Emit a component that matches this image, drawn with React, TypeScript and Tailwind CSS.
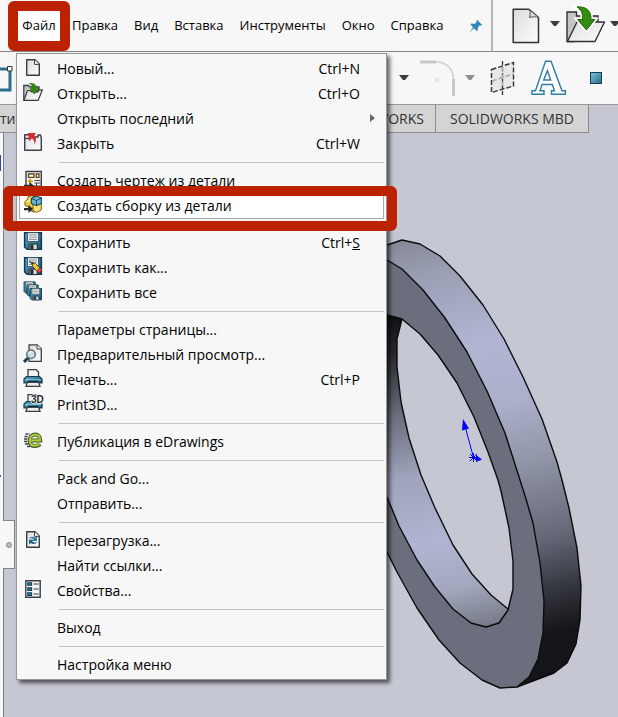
import { ReactNode } from "react";

type Entry = {
  label: string;
  icon?: ReactNode;
  shortcut?: ReactNode;
  submenu?: boolean;
  active?: boolean;
};

const DARK = "#3b3f45";

function Icon({ children }: { children?: ReactNode }) {
  return (
    <svg viewBox="0 0 20 21" className="h-[21px] w-5 shrink-0 overflow-visible" aria-hidden="true">
      {children}
    </svg>
  );
}

function Sheet() {
  return (
    <>
      <path d="M3.7 1.7H12L16.3 6V17.3H3.7Z" fill="url(#paper)" stroke={DARK} strokeWidth="1.4" strokeLinejoin="round" />
      <path d="M11.5 1.7V6.4H16.3" fill="#fff" stroke={DARK} strokeWidth="1" />
    </>
  );
}

function Floppy({ x = 0, y = 0, s = 1 }: { x?: number; y?: number; s?: number }) {
  return (
    <g transform={`translate(${x} ${y}) scale(${s})`}>
      <path d="M1.6 .7H18.4V17.4H4L1.6 15Z" fill="url(#steel)" stroke="#0d3850" strokeWidth="1.4" />
      <path d="M4.5 .7H15.5V9.5H4.5Z" fill="#f2f2f2" stroke="#22475c" strokeWidth=".8" />
      <path d="M6 3H14M6 5.2H14M6 7.4H14" stroke="#8a8a8a" strokeWidth="1" />
      <path d="M6 12H14.5V17.6H6Z" fill="#8c9298" stroke="#26323a" strokeWidth="1" />
      <path d="M7.5 12.8H10V17H7.5Z" fill="#23292e" />
      <path d="M11 12.8H13.5V17H11Z" fill="#d5d8da" />
    </g>
  );
}

function Printer() {
  return (
    <>
      <path d="M5 8V.7H13.3L15.5 3V8" fill="#f4f4f4" stroke={DARK} strokeWidth="1.3" />
      <path d="M3.5 7.5H16.5L19 10V14H1V10Z" fill="url(#steel)" stroke="#123a50" strokeWidth="1.2" />
      <path d="M2 10.8H18" stroke="#8ccbe3" strokeWidth="1.2" />
      <path d="M4.5 13H15.5L17 17.4H3Z" fill="#ececec" stroke={DARK} strokeWidth="1.3" />
      <path d="M5 12.6H15" stroke="#0c2c3d" strokeWidth="1.8" />
    </>
  );
}

const newIcon = (
  <Icon>
    <Sheet />
  </Icon>
);

const openIcon = (
  <Icon>
    <path d="M.8 2.5H5.5L7 4H16V7L5 17.3H.8Z" fill="#c7c7c7" stroke={DARK} strokeWidth="1.3" />
    <path d="M4.5 7.5H7L8.5 9H15L16 6.8H19.4L15.2 17.3H1Z" fill="url(#paper)" stroke={DARK} strokeWidth="1.2" strokeLinejoin="round" />
    <path d="M6.5 .6C10.5-.2 13.4 1.4 13.4 5.2H16L11.4 11 7 5.6H9.8C9.8 3.4 9 1.8 6.5 .6Z" fill="#348c0e" stroke="#1e6705" strokeWidth=".6" />
  </Icon>
);

const closeIcon = (
  <Icon>
    <path d="M1.7 1.7H6L7.5 4H15V2H17.5L18.3 5V17.3H1.7Z" fill="url(#paper)" stroke={DARK} strokeWidth="1.4" strokeLinejoin="round" />
    <path d="M2 5.5H6" stroke={DARK} strokeWidth="1.2" />
    <path d="M5 0H13L11.3 2.2C13.2 4 13.6 7.5 11.6 11.2C11.4 8.5 10.8 6.5 9 5.2L6 8.2Z" fill="#d32a38" />
  </Icon>
);

const drawingIcon = (
  <Icon>
    <path d="M3 1.5H18.3V16.3H3Z" fill="#f4f3ef" stroke={DARK} strokeWidth="1.4" />
    <path d="M5.5 4H11V7.3H5.5ZM13.2 4H16V7.3H13.2Z" fill="#fff" stroke="#5e4b15" strokeWidth="1.3" />
    <path d="M5.5 9.8H8.5V12.5H5.5Z" fill="#f6cf4d" />
    <path d="M7 8.8V14M4.8 11.3H10" stroke="#c99d22" strokeWidth="1.4" />
    <path d="M11.5 10.5H17.5M11.5 13H17.5M13.5 13V16" stroke={DARK} />
    <path d="M1 14.8H6.5V12L11 15.8L6.5 19.500V16.8H1Z" fill="#25282c" />
  </Icon>
);

const assemblyIcon = (
  <Icon>
    <path d="M2 6.500L5 4V1.800L8.500 .5L12 2V7L15 8V15.500L10.500 17L6 15V12L2 10.500Z" fill="#f4c93a" stroke="#735610" strokeWidth="1" />
    <path d="M3 7L6.500 5V2.500" fill="none" stroke="#fff0a5" strokeWidth="1.3" />
    <path d="M10 8.500L13.500 10.500L18.300 8V14.800L13.500 17.500L10 15.500Z" fill="#ffe070" stroke="#735610" strokeWidth="1" />
    <path d="M8.400 3.400L13 1L18.400 3V8.300L13.600 10.700L8.400 8.600Z" fill="#6eb4d3" stroke="#164b66" strokeWidth="1.1" />
    <path d="M8.500 3.500L13.500 5.500L18.400 3M13.500 5.500V10.500" fill="none" stroke="#164b66" strokeWidth="1" />
    <path d="M1 12.900H5.500V10L10 14L5.500 18V15.200H1Z" fill="#24272b" />
  </Icon>
);

const saveIcon = (
  <Icon>
    <Floppy />
  </Icon>
);

const saveAsIcon = (
  <Icon>
    <Floppy />
    <path d="M6 4L10 7L13 10" stroke="#287da4" strokeWidth="1.5" />
    <path d="M8.5 5.5L12.5 6.5L18.6 12.7L15.6 15.8L9.8 9.7Z" fill="#efc13c" stroke="#51401a" strokeWidth=".9" />
    <path d="M16.8 11L19 13.2L16.2 16L14 13.8Z" fill="#e24c4c" stroke="#762323" strokeWidth=".7" />
    <path d="M8.3 5.3L10.7 6L9.2 7.8Z" fill="#222" />
  </Icon>
);

const saveAllIcon = (
  <Icon>
    <Floppy s={0.66} y={-0.5} />
    <Floppy s={0.66} x={3} y={2.5} />
    <Floppy s={0.68} x={6} y={6} />
  </Icon>
);

const previewIcon = (
  <Icon>
    <path d="M6 .8H14.2L18.3 4.8V17.3H6Z" fill="url(#paper)" stroke={DARK} strokeWidth="1.3" />
    <path d="M14 .8V5H18.3" fill="#fff" stroke={DARK} />
    <path d="M1 17.8L6 13" stroke="#173f54" strokeWidth="3" />
    <circle cx="8" cy="10.3" r="4.3" fill="#c4dfe9" fillOpacity=".9" stroke="#66727a" strokeWidth="1.5" />
    <path d="M5.8 9.8A2.5 2.5 0 0 1 8.8 7.5" stroke="#fff" fill="none" />
  </Icon>
);

const printIcon = (
  <Icon>
    <Printer />
  </Icon>
);

const print3dIcon = (
  <Icon>
    <Printer />
    <text x="8" y="8.5" fontFamily="Liberation Sans" fontWeight="700" fontSize="10" fill="#26292c" stroke="#f7f7f7" strokeWidth="1.5" paintOrder="stroke">
      3D
    </text>
  </Icon>
);

const edrawingsIcon = (
  <Icon>
    <path d="M2.5 3H7M1.5 5.5H5M1 8H4.5M1 10.5H4.5M2 13H6M4 15.5H9" stroke={DARK} strokeWidth="1.3" strokeDasharray="3 1" />
    <path d="M8 9.5H17.2C17.2 5.4 15 3.5 12.4 3.5C8.9 3.5 6.5 6.1 6.5 9.7C6.5 13.2 8.8 15 12 15C14.1 15 15.8 14.3 16.8 13" fill="none" stroke="#41502a" strokeWidth="4" />
    <path d="M8 9.3H17C17 5.4 15 3.7 12.4 3.7C9 3.7 6.8 6.2 6.8 9.7C6.8 13 9 14.7 12 14.7C14 14.7 15.5 14.1 16.5 13.2" fill="none" stroke="#a9c936" strokeWidth="2.3" />
  </Icon>
);

const reloadIcon = (
  <Icon>
    <Sheet />
    <path d="M5.8 8.7C7 6.5 10.5 6 12.3 7.8L14 6.4V11H9.3L10.9 9.2C9.4 8.2 7.8 8.1 5.8 8.7Z" fill="#2c7a9d" />
    <path d="M14.3 12C13 14.2 9.7 14.6 7.8 12.9L6 14.5V9.8H10.8L9.2 11.5C10.7 12.6 12.3 12.7 14.3 12Z" fill="#1f617f" />
  </Icon>
);

const propertiesIcon = (
  <Icon>
    <path d="M2.8 .8H17.2V17.3H2.8Z" fill="#f3f3f3" stroke={DARK} strokeWidth="1.4" />
    <path d="M4.8 2.8H8.5V5.2H4.8ZM4.8 7.8H8.5V10.3H4.8ZM4.8 12.8H8.5V15.3H4.8Z" fill="#3f9fc5" stroke="#123f56" strokeWidth="1.2" />
    <path d="M10.5 4H15.8M10.5 9H15.8M10.5 14H15.8" stroke={DARK} strokeWidth="1.2" />
  </Icon>
);

const groups: Entry[][] = [
  [
    { label: "Новый...", icon: newIcon, shortcut: "Ctrl+N" },
    { label: "Открыть...", icon: openIcon, shortcut: "Ctrl+O" },
    { label: "Открыть последний", submenu: true },
    { label: "Закрыть", icon: closeIcon, shortcut: "Ctrl+W" },
  ],
  [
    { label: "Создать чертеж из детали", icon: drawingIcon },
    { label: "Создать сборку из детали", icon: assemblyIcon, active: true },
  ],
  [
    { label: "Сохранить", icon: saveIcon, shortcut: <>Ctrl+<u>S</u></> },
    { label: "Сохранить как...", icon: saveAsIcon },
    { label: "Сохранить все", icon: saveAllIcon },
  ],
  [
    { label: "Параметры страницы..." },
    { label: "Предварительный просмотр...", icon: previewIcon },
    { label: "Печать...", icon: printIcon, shortcut: "Ctrl+P" },
    { label: "Print3D...", icon: print3dIcon },
  ],
  [{ label: "Публикация в eDrawings", icon: edrawingsIcon }],
  [{ label: "Pack and Go..." }, { label: "Отправить..." }],
  [
    { label: "Перезагрузка...", icon: reloadIcon },
    { label: "Найти ссылки..." },
    { label: "Свойства...", icon: propertiesIcon },
  ],
  [{ label: "Выход" }],
  [{ label: "Настройка меню" }],
];

const menus = ["Файл", "Правка", "Вид", "Вставка", "Инструменты", "Окно", "Справка"];

function Defs() {
  return (
    <svg className="absolute h-0 w-0" aria-hidden="true">
      <defs>
        <linearGradient id="paper" x1="0" y1="0" x2="1" y2="1">
          <stop offset="0" stopColor="#dcdcdc" />
          <stop offset="1" stopColor="#fdfdfd" />
        </linearGradient>
        <linearGradient id="steel" x1="0" y1="0" x2="1" y2="1">
          <stop offset="0" stopColor="#62a9c8" />
          <stop offset="1" stopColor="#14506e" />
        </linearGradient>
      </defs>
    </svg>
  );
}

function Caret({ light }: { light?: boolean }) {
  return (
    <button type="button" aria-label="Ещё" className={light ? "shrink-0 text-[#8d8d8d]" : "shrink-0 text-[#3c3c3c]"}>
      <svg viewBox="0 0 10 6" className="h-[6px] w-[10px]">
        <path d="M0 0H10L6 5H4Z" fill="currentColor" />
      </svg>
    </button>
  );
}

function MenuBar() {
  return (
    <header className="flex h-[52px] shrink-0 border-b border-[#868686] bg-[#f7f7f7]">
      <nav className="flex flex-1 items-center pl-[18px] text-[13px] text-black">
        {menus.map((name, i) => (
          <button key={name} type="button" className={i === 0 ? "relative z-20 mr-1 h-[30px] w-[42px] bg-white" : "h-[30px] px-2"}>
            {name}
            {i === 0 && <span className="absolute -inset-[10px] rounded-md border-10 border-[#bb2200]" />}
          </button>
        ))}
        <button type="button" aria-label="Закрепить" className="mr-2 ml-auto">
          <svg viewBox="0 0 14 14" className="h-[14px] w-[14px]">
            <path d="M8 .8L13.2 6L11.8 6.8L10.8 6.2L8.7 8.7L8.8 11.3L7.8 12L5 9.2L.8 13.2L4 8.2L1.5 5.4L2.4 4.6L5.4 5L7.8 3.1L7.2 2Z" fill="#2f86b2" />
          </svg>
        </button>
      </nav>
      <div className="flex w-[127px] shrink-0 items-center overflow-hidden border-l-2 border-[#b5b5b5] pl-[19px]">
        <button type="button" aria-label="Новый" className="shrink-0">
          <svg viewBox="0 0 28 36" className="h-9 w-7">
            <path d="M1.2 1.2H17L26.5 9.5V34.5H1.2Z" fill="url(#paper)" stroke="#2f3135" strokeWidth="1.5" strokeLinejoin="round" />
            <path d="M17 1.2C18.500 4 18.500 6 17.500 9.500C21 8.500 24 8.500 26.500 9.500Z" fill="#ddd" stroke="#555" />
          </svg>
        </button>
        <div className="mx-[10px] mb-1 flex">
          <Caret />
        </div>
        <button type="button" aria-label="Открыть" className="mx-[-4px] mb-1 shrink-0">
          <svg viewBox="0 0 40 38" className="h-[38px] w-10">
            <path d="M1 7H10.500V11H32V18L8 36.500H1Z" fill="#c5c5c5" stroke="#2f3135" strokeWidth="1.400" />
            <path d="M11 17H38.500L29 36.500H1.500Z" fill="url(#paper)" stroke="#2f3135" strokeWidth="1.400" strokeLinejoin="round" />
            <path d="M11 2C20 1 25.500 6 25 14.500H28.800L20.500 25L11.500 14.500H16.500C17 8.500 15.500 5 11 2Z" fill="#348c10" stroke="#fff" strokeWidth="4" paintOrder="stroke" />
            <path d="M11 2C20 1 25.500 6 25 14.500H28.800L20.500 25L11.500 14.500H16.500C17 8.500 15.500 5 11 2Z" fill="#348c10" stroke="#226d07" />
          </svg>
        </button>
        <div className="mb-1 ml-2 flex">
          <Caret />
        </div>
      </div>
    </header>
  );
}

function ToolBar() {
  return (
    <div className="flex h-[53px] shrink-0 items-center justify-between border-b border-[#999] bg-[#f7f7f7]">
      <svg viewBox="0 0 13 30" className="h-[30px] w-[13px]">
        <path d="M0 6H10V27H0" fill="none" stroke="#2d6d90" strokeWidth="3" />
        <path d="M7.5 3.5H12V8H7.5Z" fill="#fff" stroke="#333" />
      </svg>
      <div className="flex items-center pr-4">
        <svg viewBox="0 0 24 24" className="mr-3 h-6 w-6">
          <circle cx="12" cy="12" r="10" fill="none" stroke="#2d6d90" strokeWidth="3" />
        </svg>
        <Caret />
        <button type="button" aria-label="Скругление" className="mr-[10px] ml-[11px]">
          <svg viewBox="0 0 35 36" className="h-9 w-[35px]">
            <path d="M0 2H16" stroke="#c7c7c7" strokeWidth="3" />
            <path d="M16 2C27 2 33.5 9 33.5 20" fill="none" stroke="#d7d7d7" strokeWidth="2" />
            <path d="M33.5 19V36" stroke="#c7c7c7" strokeWidth="3" />
            <path d="M15 18L19 22M19 18L15 22" stroke="#ddd" strokeWidth="1.3" />
          </svg>
        </button>
        <Caret light />
        <button type="button" aria-label="Плоскость" className="mr-4 ml-[15px]">
          <svg viewBox="0 0 25 34" className="h-[34px] w-[25px]">
            <path d="M1.5 8.5L23.5 1.5V25L1.5 31.5Z" fill="#e6e8e9" stroke="#303236" strokeWidth="1.4" strokeDasharray="5 2" />
            <path d="M12.5 0V34" stroke="#303236" strokeWidth="1.3" strokeDasharray="4 2" />
            <path d="M2 20L23 13M12.5 6V26" stroke="#aaa" strokeWidth="1.5" strokeDasharray="5 2" />
          </svg>
        </button>
        <button type="button" aria-label="Текст">
          <svg viewBox="0 0 36 36" className="h-9 w-9">
            <path d="M14.5 1.2H20L31 30.7H34.3V34.3H20.5V30.7H23.5L21.300 24.500H11L9 30.700H13V34.300H1V30.700H4.500Z M12.700 20H19.700L16.400 10.500Z" fill="#fff" stroke="#2f7ea5" strokeWidth="1.4" fillRule="evenodd" />
          </svg>
        </button>
        <button type="button" aria-label="Точка" className="ml-[23px] h-3 w-3 border border-[#173e52] bg-linear-to-br from-[#78c0dd] to-[#2b708f]" />
      </div>
    </div>
  );
}

function Ring() {
  const outerBack = "387,245 402,240 420,244 440,256 460,276 483,305 504,339 523,377 542,419 557,462 562,480 569,508 577,548 581,586 580,620 576,644 567,663 554,673 517,687";
  const outerFront = "387,260 402,269 423,290 445,318 467,352 487,391 505,433 520,480 526,499 533,523 540,563 544,601 543,633 538,659 529,677 517,687 500,688 482,680 460,663 439,640 417,608 397,572 387,552";
  const innerFront = "387,315 402,319 420,334 438,355 457,383 474,417 488,452 498,480 501,491 509,528 513,561 513,589 508,610 499,623 486,627 471,623 453,609 435,587 417,560 399,526 387,497";
  const innerBack = "402,319 397,339 397,367 401,402 409,438 421,475 435,508 453,545 472,574 491,595 508,609";
  return (
    <svg viewBox="387 233 231 484" className="absolute top-[100px] left-[387px] h-[484px] w-[231px]" aria-hidden="true">
      <defs>
        <linearGradient id="rim" gradientUnits="userSpaceOnUse" x1="400" y1="240" x2="510" y2="687">
          <stop offset="0" stopColor="#858996" />
          <stop offset=".09" stopColor="#9b9fb5" />
          <stop offset=".26" stopColor="#b1b6d3" />
          <stop offset=".4" stopColor="#abafca" />
          <stop offset=".53" stopColor="#9196a9" />
          <stop offset=".7" stopColor="#666978" />
          <stop offset=".82" stopColor="#33353d" />
          <stop offset=".91" stopColor="#141518" />
          <stop offset="1" stopColor="#141518" />
        </linearGradient>
        <linearGradient id="bore" gradientUnits="userSpaceOnUse" x1="387" y1="315" x2="450" y2="632">
          <stop offset="0" stopColor="#0d0e10" />
          <stop offset=".12" stopColor="#282a2f" />
          <stop offset=".3" stopColor="#666a78" />
          <stop offset=".5" stopColor="#9fa3bb" />
          <stop offset=".72" stopColor="#b0b5d2" />
          <stop offset=".87" stopColor="#a3a8bf" />
          <stop offset="1" stopColor="#777b89" />
        </linearGradient>
      </defs>
      <polygon points={`${outerBack} 529,677 538,659 543,633 544,601 540,563 533,523 520,480 505,433 487,391 467,352 445,318 423,290 402,269 387,260`} fill="url(#rim)" />
      <path d={`M${outerFront}Z M${innerFront}Z`} fill="#6b6e7c" fillRule="evenodd" />
      <polygon points={`387,315 ${innerBack} 499,623 486,627 471,623 453,609 435,587 417,560 399,526 387,497`} fill="url(#bore)" />
      <g fill="none" stroke="#0b0b0c" strokeWidth="1.4" strokeLinejoin="round">
        <polyline points={outerBack} />
        <polyline points={outerFront} />
        <polyline points={innerFront} />
        <polyline points={innerBack} />
      </g>
      <g stroke="#0000f5" fill="#0000f5">
        <path d="M473.5 457.5L465.5 428M473.5 457.5L478 459M469 457.5H478M470 454L477 461M477 454L470 461M473.5 453V462" />
        <path d="M463 419L469 428.5L462 430.500ZM476 455L482 459.500L476 462Z" stroke="none" />
      </g>
    </svg>
  );
}

function MenuRow({ item }: { item: Entry }) {
  return (
    <li className="relative">
      <button
        type="button"
        className={
          item.active
            ? "flex h-[25px] w-full items-center gap-[14px] border border-[#a8a8a8] bg-white pr-[23px] pb-[2px] pl-[3px] text-left"
            : "flex h-[25px] w-full items-center gap-[14px] border border-transparent pr-[23px] pb-[2px] pl-[3px] text-left"
        }
      >
        {item.icon ?? <Icon />}
        <span className="flex-1 whitespace-nowrap">{item.label}</span>
        {item.shortcut && <span>{item.shortcut}</span>}
      </button>
      {item.submenu && (
        <svg viewBox="0 0 5 8" className="absolute top-[7px] right-[9px] h-2 w-[5px]">
          <path d="M0 0L5 4L0 8Z" fill="#666" />
        </svg>
      )}
      {item.active && <span className="pointer-events-none absolute -top-2 -right-[13px] -bottom-3 -left-4 z-10 rounded-md border-10 border-[#bb2200]" />}
    </li>
  );
}

function FileMenu() {
  return (
    <div className="absolute top-[53px] left-4 z-10 w-[371px] border border-[#979797] bg-[#f7f7f7] px-[2px] pt-[3px] pb-[1px] text-[14px] text-black shadow-[3px_3px_4px_rgba(0,0,0,0.6)]">
      {groups.map((group, i) => (
        <ul key={i}>
          {i > 0 && <li role="separator" className="mt-[5px] mb-[6px] ml-10 h-px bg-[#c4c4c4]" />}
          {group.map((item) => (
            <MenuRow key={item.label} item={item} />
          ))}
        </ul>
      ))}
    </div>
  );
}

function App() {
  return (
    <div className="relative flex min-h-screen w-full flex-col overflow-hidden bg-[#c5c8d3] font-['Open_Sans','Noto_Sans',sans-serif]">
      <Defs />
      <MenuBar />
      <ToolBar />
      <div className="flex h-7 shrink-0 pr-[29px] text-[14px] text-[#333]">
        <button type="button" className="w-4 overflow-hidden border-b border-[#8c8c8c] bg-[#d4d4d4] text-left">
          ти
        </button>
        <button type="button" className="flex-1 border-r border-b border-[#8c8c8c] bg-[#d4d4d4] pr-[11px] text-right">
          SOLIDWORKS
        </button>
        <button type="button" className="w-[153px] border-r border-b border-[#8c8c8c] bg-[#d4d4d4] whitespace-nowrap">
          SOLIDWORKS MBD
        </button>
      </div>
      <main className="relative flex flex-1">
        <aside className="flex w-1 shrink-0 flex-col justify-between border-r border-[#808080] bg-[#f7f7f7] pt-[22px] pb-[240px]">
          <span className="h-4 w-[1px] bg-[#274f9b]" />
          <span className="h-[2px] w-[1px] bg-[#1b6cb0]" />
        </aside>
        <button type="button" aria-label="Свернуть панель" className="absolute top-[387px] left-[3px] flex h-[49px] w-3 items-center justify-center border border-l-0 border-[#858585] bg-[#f7f7f7]">
          <span className="h-[6px] w-[6px] rounded-full border border-[#8c8c8c] bg-[#bbb]" />
        </button>
        <Ring />
      </main>
      <FileMenu />
    </div>
  );
}

export default App;
